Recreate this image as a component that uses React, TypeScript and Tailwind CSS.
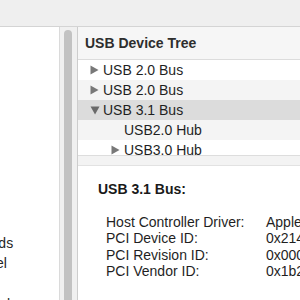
import React from "react";

const RightTri = () => (
  <svg width="9" height="10" viewBox="0 0 9 10" className="shrink-0">
    <path d="M0.5 0.5 L8.5 5 L0.5 9.5 Z" fill="#787878" />
  </svg>
);

const DownTri = () => (
  <svg width="10" height="9" viewBox="0 0 10 9" className="shrink-0">
    <path d="M0.5 0.5 L9.5 0.5 L5 8.5 Z" fill="#6a6a6a" />
  </svg>
);

type Row = { label: string; level: number; tri: "right" | "down" | null; bg: string };

const rows: Row[] = [
  { label: "USB 2.0 Bus", level: 0, tri: "right", bg: "bg-white" },
  { label: "USB 2.0 Bus", level: 0, tri: "right", bg: "bg-[#f4f4f4]" },
  { label: "USB 3.1 Bus", level: 0, tri: "down", bg: "bg-[#dcdcdc]" },
  { label: "USB2.0 Hub", level: 1, tri: null, bg: "bg-[#f4f4f4]" },
  { label: "USB3.0 Hub", level: 1, tri: "right", bg: "bg-white" },
];

const details: [string, string][] = [
  ["Host Controller Driver:", "AppleUSBXHCIAR"],
  ["PCI Device ID:", "0x2142"],
  ["PCI Revision ID:", "0x0000"],
  ["PCI Vendor ID:", "0x1b21"],
];

const sidebar = ["Ethernet Cards", "Fibre Channel", "FireWire", "Graphics/Displays"];

export default function App() {
  return (
    <div className="w-[300px] h-[300px] overflow-hidden flex flex-col bg-white font-['Liberation_Sans',Arial,sans-serif] text-[#1f1f1f]">
      <div className="h-[27px] shrink-0 bg-[#efefef] border-b border-[#d4d4d4]" />
      <div className="flex flex-1 min-h-0">
        <div className="w-[59px] shrink-0 bg-white pt-[206px] flex flex-col">
          {sidebar.map((s, i) => (
            <div
              key={s}
              className={`h-[20px] shrink-0 overflow-hidden flex items-center ${i === 3 ? "mt-[1px]" : ""}`}
            >
              <span className="ml-[-81px] whitespace-nowrap text-[14px] text-[#262626]">{s}</span>
            </div>
          ))}
        </div>
        <div className="w-[19px] shrink-0 bg-[#f0f0f0] border-l border-[#dadada] border-r border-r-[#cdcdcd] flex pt-[3px] pl-[4px]">
          <div className="w-[8px] h-[400px] rounded-full bg-[#c2c2c2]" />
        </div>
        <div className="flex-1 min-w-0 flex flex-col overflow-hidden">
          <div className="h-[33px] shrink-0 bg-[#f6f6f6] border-b border-[#dcdcdc] flex items-center pl-[7px]">
            <span className="whitespace-nowrap text-[14px] font-bold text-[#2e2e2e]">USB Device Tree</span>
          </div>
          <div className="h-[95px] shrink-0 overflow-hidden flex flex-col">
            {rows.map((r, i) => (
              <div
                key={i}
                className={`h-[20px] shrink-0 flex items-center whitespace-nowrap ${r.bg} ${r.level === 0 ? "pl-[12px]" : "pl-[33px]"}`}
              >
                <div className="w-[13px] shrink-0 flex items-center">
                  {r.tri === "right" && <RightTri />}
                  {r.tri === "down" && <DownTri />}
                </div>
                <span className="text-[14px]">{r.label}</span>
              </div>
            ))}
          </div>
          <div className="h-[11px] shrink-0 bg-[#f3f3f3] border-t border-[#dddddd] border-b border-b-[#e2e2e2]" />
          <div className="flex-1 bg-white pl-[20px] pt-[13px] whitespace-nowrap">
            <div className="text-[14px] leading-[20px] font-bold text-[#1a1a1a]">USB 3.1 Bus:</div>
            <div className="mt-[15px] pl-[8px] flex flex-col">
              {details.map(([k, v]) => (
                <div key={k} className="flex text-[14px] leading-[16.4px]">
                  <span className="w-[160px] shrink-0">{k}</span>
                  <span>{v}</span>
                </div>
              ))}
            </div>
          </div>
        </div>
      </div>
    </div>
  );
}
